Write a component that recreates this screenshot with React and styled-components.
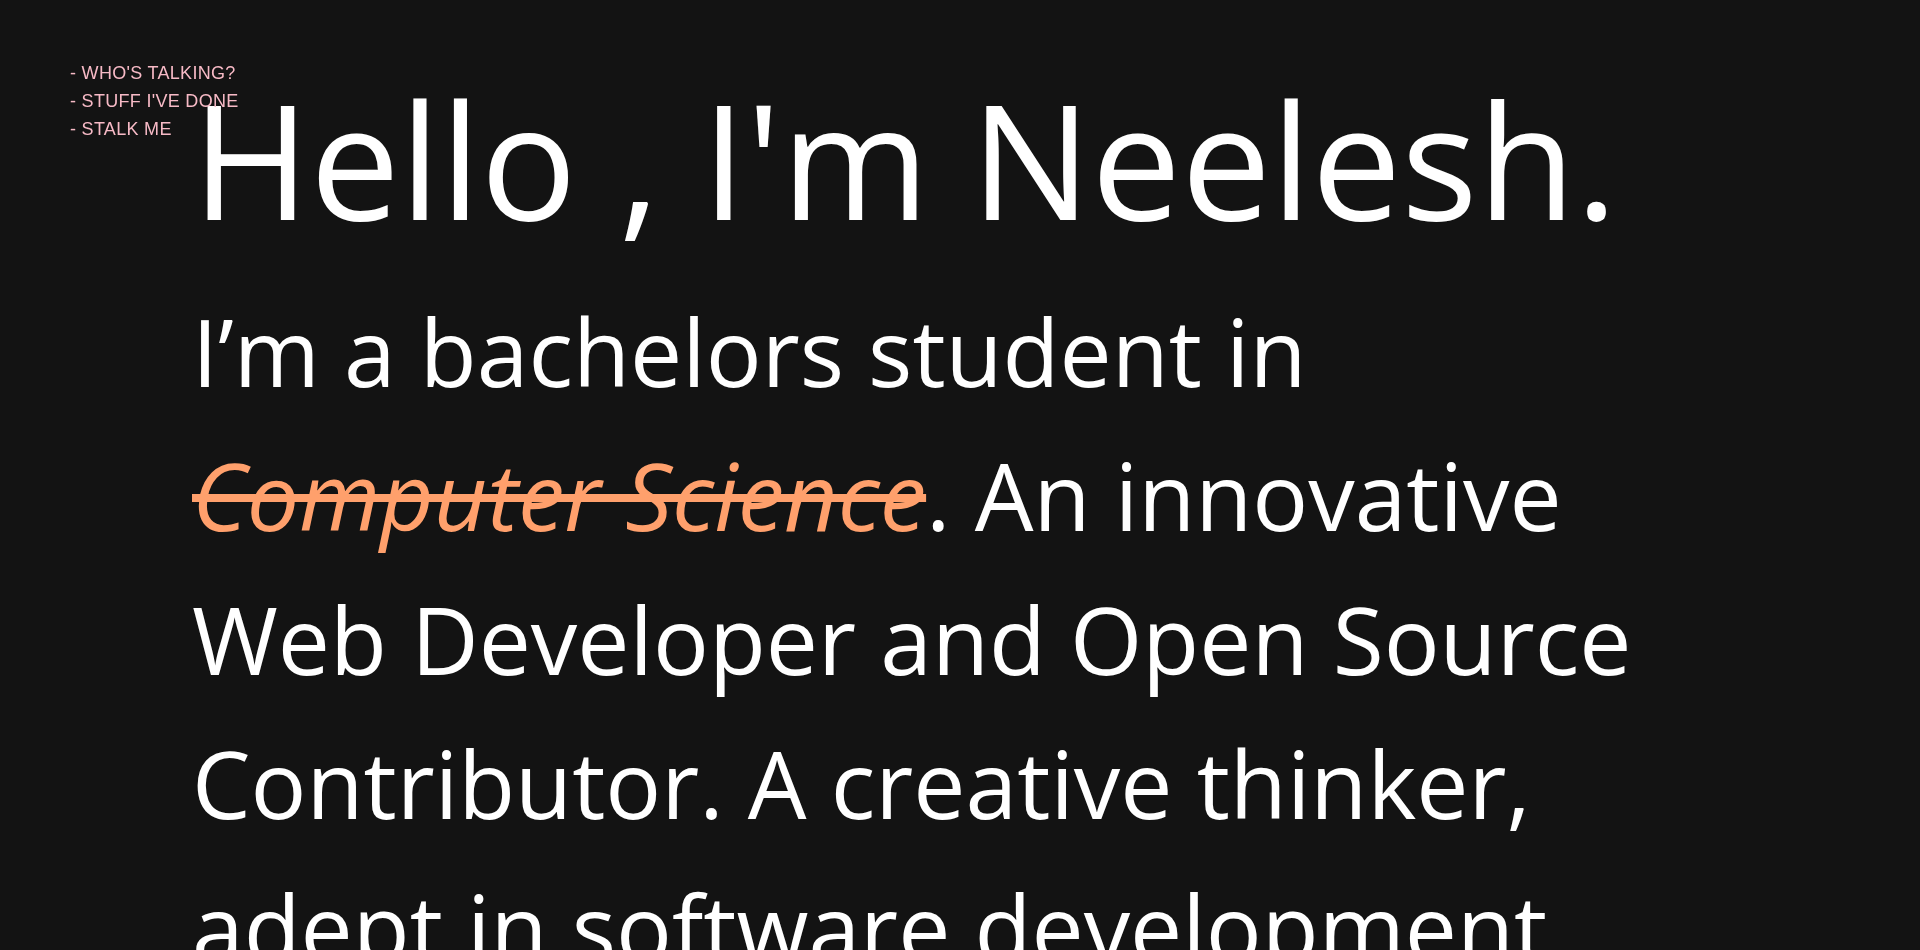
import styled, { createGlobalStyle } from 'styled-components';

const GlobalStyle = createGlobalStyle`
  html, body {
    margin: 0;
    padding: 0;
    background-color: #131313;
  }
  body {
    overflow: hidden;
  }
`;

const links = ["- WHO'S TALKING?", "- STUFF I'VE DONE", "- STALK ME"];

export default function App() {
  return (
    <>
      <GlobalStyle />
      <Page>
        <Nav>
          {links.map((link) => (
            <NavLink key={link} href="#">{link}</NavLink>
          ))}
        </Nav>
        <Main>
          <Title>Hello , I'm Neelesh.</Title>
          <Intro>
            I’m a bachelors student in <Struck>Computer Science</Struck>. An innovative
            Web Developer and Open Source Contributor. A creative thinker, adept in
            software development and always eager to learn new things.
          </Intro>
        </Main>
      </Page>
    </>
  );
}

const Page = styled.div`
  min-height: 950px;
  background-color: #131313;
  color: #fff;
`;

const Nav = styled.nav`
  position: fixed;
  top: 59px;
  left: 70px;
  display: flex;
  flex-direction: column;
  z-index: 2;
`;

const NavLink = styled.a`
  font-family: 'Liberation Sans', Arial, sans-serif;
  font-size: 18px;
  line-height: 28px;
  letter-spacing: 0.3px;
  color: #f7bac6;
  text-decoration: none;
  text-transform: uppercase;
`;

const Main = styled.main`
  padding: 78px 0 0 192px;
  max-width: 1480px;
`;

const Title = styled.h1`
  margin: 0;
  font-family: 'Open Sans', sans-serif;
  font-weight: 400;
  font-size: 160px;
  line-height: 160px;
  color: #fff;
`;

const Intro = styled.p`
  margin: 41px 0 0;
  font-family: 'Open Sans', sans-serif;
  font-weight: 400;
  font-size: 93px;
  line-height: 144px;
  color: #fff;
`;

const Struck = styled.span`
  font-style: italic;
  color: #ffa06c;
  text-decoration: line-through;
  text-decoration-thickness: 8px;
  text-decoration-color: #ffa06c;
`;
